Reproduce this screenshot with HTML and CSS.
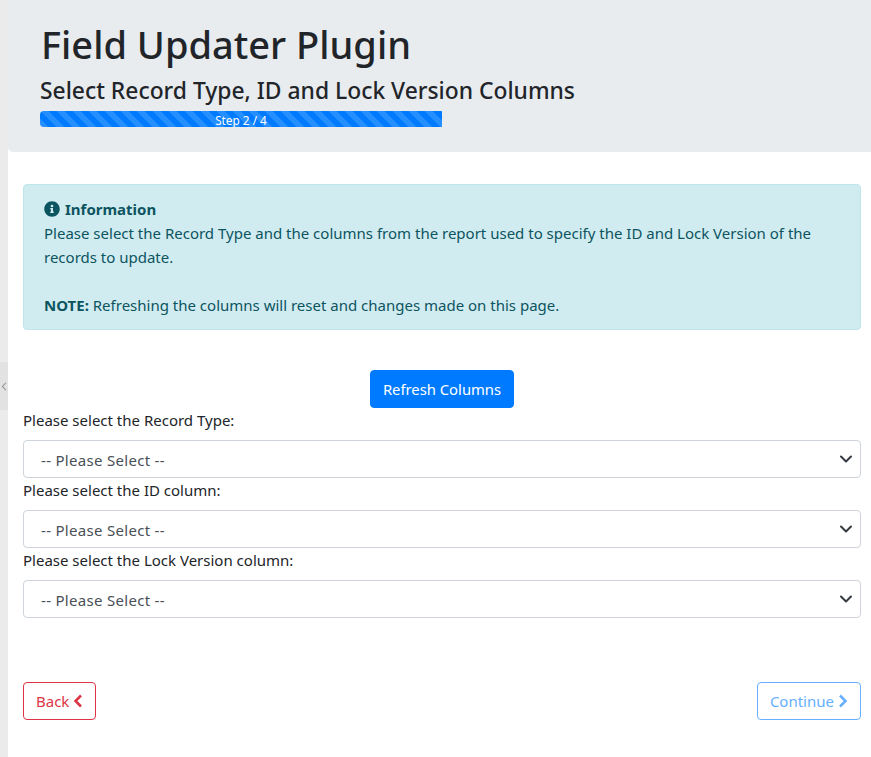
FILE: index.html
```html
<!DOCTYPE html>
<html lang="en">
<head>
  <meta charset="UTF-8" />
  <title>Field Updater Plugin</title>
  <link rel="stylesheet" href="styles.css">
</head>
<body>
  <!-- collapsed side panel -->
  <div class="side-toggle">
    <svg viewBox="0 0 8 12" width="6" height="9"><path d="M6.5 1 2 6l4.5 5" fill="none" stroke="#8a8a8a" stroke-width="1.4"/></svg>
  </div>

  <div class="main">
    <div class="jumbotron">
      <h1>Field Updater Plugin</h1>
      <h4>Select Record Type, ID and Lock Version Columns</h4>
      <div class="progress"><div class="progress-bar">Step 2 / 4</div></div>
    </div>

    <div class="content">
      <div class="alert">
        <div class="alert-title">
          <svg class="info-icon" viewBox="0 0 512 512" width="16" height="16"><path fill="#0c5460" d="M256 8C119 8 8 119 8 256s111 248 248 248 248-111 248-248S393 8 256 8zm0 110a42 42 0 1 1 0 84 42 42 0 0 1 0-84zm56 254c0 7-5 12-12 12h-88c-7 0-12-5-12-12v-24c0-7 5-12 12-12h12v-64h-12c-7 0-12-5-12-12v-24c0-7 5-12 12-12h64c7 0 12 5 12 12v100h12c7 0 12 5 12 12v24z"/></svg>
          <b>Information</b>
        </div>
        <div>Please select the Record Type and the columns from the report used to specify the ID and Lock Version of the records to update.</div>
        <br>
        <div><b>NOTE:</b> Refreshing the columns will reset and changes made on this page.</div>
      </div>

      <div class="refresh-row">
        <button class="btn btn-primary">Refresh Columns</button>
      </div>

      <label>Please select the Record Type:</label>
      <div class="select">-- Please Select --<svg viewBox="0 0 12 8" width="12" height="8"><path d="M1 1.500l5 5 5-5" fill="none" stroke="#343a40" stroke-width="2" stroke-linecap="round" stroke-linejoin="round"/></svg></div>
      <label>Please select the ID column:</label>
      <div class="select">-- Please Select --<svg viewBox="0 0 12 8" width="12" height="8"><path d="M1 1.500l5 5 5-5" fill="none" stroke="#343a40" stroke-width="2" stroke-linecap="round" stroke-linejoin="round"/></svg></div>
      <label>Please select the Lock Version column:</label>
      <div class="select">-- Please Select --<svg viewBox="0 0 12 8" width="12" height="8"><path d="M1 1.500l5 5 5-5" fill="none" stroke="#343a40" stroke-width="2" stroke-linecap="round" stroke-linejoin="round"/></svg></div>

      <div class="nav-buttons">
        <button class="btn btn-back">Back <svg viewBox="0 0 10 16" width="10" height="16"><path d="M8 2.500 2.500 8 8 13.500" fill="none" stroke="#dc3545" stroke-width="2.500"/></svg></button>
        <button class="btn btn-continue">Continue <svg viewBox="0 0 10 16" width="10" height="16"><path d="M2 2.500 7.500 8 2 13.500" fill="none" stroke="#66b0ff" stroke-width="2.500"/></svg></button>
      </div>
    </div>
  </div>
</body>
</html>
```

FILE: styles.css
```css
* {
  box-sizing: border-box;
}
html, body {
  height: 100%;
}
body {
  margin: 0;
  padding-left: 8px;
  background: #ebebeb;
  color: #212529;
  font-family: "Noto Sans", "Open Sans", sans-serif;
  font-size: 15px;
  line-height: 24px;
  overflow: hidden;
}
.side-toggle {
  position: absolute;
  left: 0;
  top: 362px;
  width: 8px;
  height: 48px;
  background: #e2e2e2;
  display: flex;
  align-items: center;
  justify-content: center;
}
.main {
  background: #fff;
  min-height: 100%;
}
.jumbotron {
  height: 152px;
  padding: 20px 32px 0;
  background: #e9ecef;
  border-bottom-left-radius: 5px;
}
h1 {
  margin: 0 0 0 1px;
  font-size: 38px;
  font-weight: 500;
  line-height: 48px;
}
h4 {
  margin: 9px 0 0;
  font-size: 22.850px;
  font-weight: 500;
  line-height: 28px;
}
.progress {
  width: 402px;
  height: 16px;
  margin-top: 6px;
  background: #e9ecef;
  border-radius: 4px 0 0 4px;
  overflow: hidden;
}
.progress-bar {
  height: 100%;
  background-color: #007bff;
  background-image: linear-gradient(45deg, rgba(255,255,255,.15) 25%, transparent 25%, transparent 50%, rgba(255,255,255,.15) 50%, rgba(255,255,255,.15) 75%, transparent 75%, transparent);
  background-size: 16px 16px;
  color: #fff;
  font-size: 11.800px;
  line-height: 18px;
  text-align: center;
}
.content {
  padding: 32px 10px 0 15px;
}
.alert {
  height: 146px;
  padding: 12px 20px;
  background: #d1ecf1;
  border: 1px solid #bee5eb;
  border-radius: 4px;
  color: #0c5460;
}
.alert-title {
  display: flex;
  align-items: center;
  gap: 5px;
}
.refresh-row {
  display: flex;
  justify-content: center;
  margin-top: 40px;
}
.btn {
  display: inline-flex;
  align-items: center;
  gap: 4px;
  height: 38px;
  padding: 0 12px;
  border: 1px solid transparent;
  border-radius: 4px;
  background: #fff;
  font: inherit;
}
.btn-primary {
  background: #007bff;
  border-color: #007bff;
  color: #fff;
  font-size: 14.800px;
}
.btn-back {
  border-color: #dc3545;
  color: #dc3545;
}
.btn-continue {
  border-color: #66b0ff;
  color: #66b0ff;
}
label {
  display: block;
  height: 32px;
}
.select {
  display: flex;
  align-items: center;
  justify-content: space-between;
  height: 38px;
  padding: 2px 8px 0 17px;
  border: 1px solid #ced4da;
  border-radius: 4px;
  color: #495057;
  letter-spacing: .3px;
}
.select svg {
  margin-top: -2px;
}
.nav-buttons {
  display: flex;
  justify-content: space-between;
  margin-top: 64px;
}
```
